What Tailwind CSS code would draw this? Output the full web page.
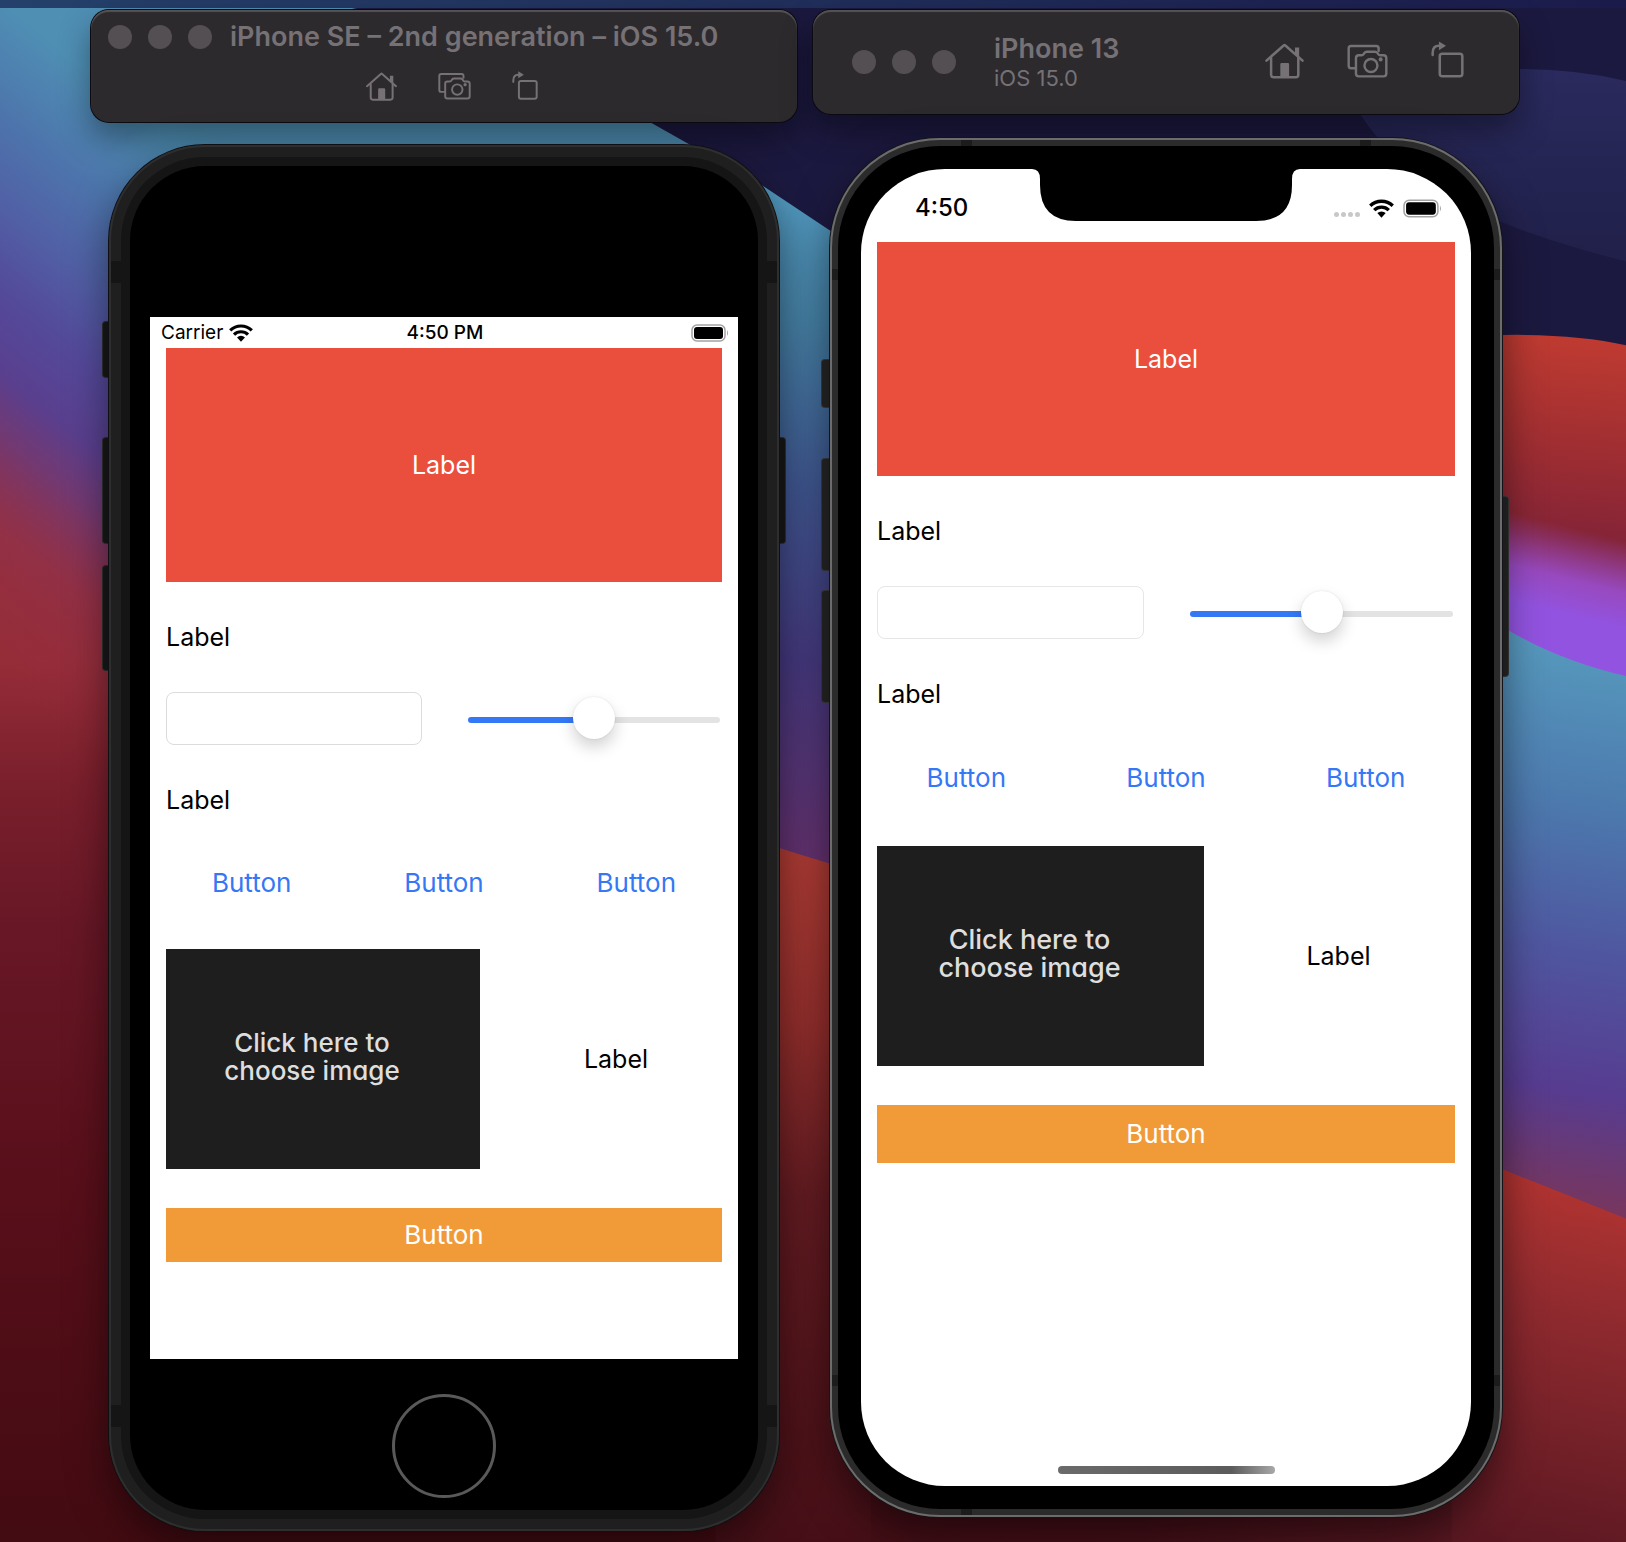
<!DOCTYPE html>
<html lang="en">
<head>
<meta charset="utf-8">
<meta name="viewport" content="width=device-width, initial-scale=1">
<title>Simulator</title>
<script src="https://cdn.jsdelivr.net/npm/@tailwindcss/browser@4"></script>
</head>
<body class="font-['Inter',sans-serif] text-black">
<svg class="hidden" aria-hidden="true">
  <symbol id="home" viewBox="50 36 92 86">
    <g fill="none" stroke="currentColor" stroke-width="6" stroke-linecap="round" stroke-linejoin="round">
      <path d="M53 78 L94 42 Q96 40 98 42 L139 78"/>
      <path d="M64 72 V112 Q64 118 70 118 H123 Q129 118 129 112 V72"/>
    </g>
    <path d="M121 47 h10 v24 l-10 -9 z M86 118 V87 Q86 84 89 84 H104 Q107 84 107 87 V118 Z" fill="currentColor"/>
  </symbol>
  <symbol id="camera" viewBox="266 38 101 84">
    <g fill="none" stroke="currentColor" stroke-width="6" stroke-linecap="round" stroke-linejoin="round">
      <path d="M286 98 H276 Q270 98 270 92 V49 Q270 43 276 43 H338 Q344 43 344 49 V55"/>
      <path d="M295 66 H302 Q305 66 307 63 L309 60 Q311 57 315 57 H335 Q339 57 341 60 L343 63 Q345 66 348 66 H356 Q363 66 363 73 V111 Q363 118 356 118 H295 Q288 118 288 111 V73 Q288 66 295 66 Z"/>
      <circle cx="325" cy="91" r="16"/>
    </g>
    <circle cx="349" cy="76" r="5" fill="currentColor"/>
  </symbol>
  <symbol id="rotate" viewBox="485 32 79 88">
    <g fill="none" stroke="currentColor" stroke-width="6" stroke-linecap="round">
      <rect x="506" y="62" width="54" height="54" rx="6"/>
      <path d="M489 65 V60 Q489 43 504 43"/>
    </g>
    <path d="M504 33 L521 43 L504 54 Z" fill="currentColor"/>
  </symbol>
  <symbol id="wifi" viewBox="0 0 24 18">
    <g fill="none" stroke="currentColor" stroke-width="3.2">
      <path d="M1.2 6.4 A15.5 15.5 0 0 1 22.8 6.4"/>
      <path d="M5 10.6 A10 10 0 0 1 19 10.6"/>
    </g>
    <path d="M12 17.8 L8 13.4 A6 6 0 0 1 16 13.4 Z" fill="currentColor"/>
  </symbol>
  <symbol id="battery" viewBox="0 0 38 18">
    <rect x="1" y="1" width="33" height="16" rx="5" fill="none" stroke="#a3a3a3" stroke-width="1.5"/>
    <rect x="3" y="3" width="29" height="12" rx="3" fill="currentColor"/>
    <path d="M36 6 Q38 9 36 12 Z" fill="#a3a3a3"/>
  </symbol>
</svg>

<div class="relative isolate min-h-screen overflow-hidden bg-[#4a101b]">
  <!-- desktop wallpaper -->
  <svg class="absolute inset-0 -z-10 h-full w-full" viewBox="0 0 1568 1487" preserveAspectRatio="none" aria-hidden="true">
    <defs>
      <linearGradient id="g-left" gradientUnits="userSpaceOnUse" x1="0" y1="0" x2="0" y2="1487">
        <stop offset=".34" stop-color="#97303c"/><stop offset=".43" stop-color="#952c38"/><stop offset=".51" stop-color="#7a1f2c"/>
        <stop offset=".6" stop-color="#681726"/><stop offset=".77" stop-color="#580f1a"/><stop offset="1" stop-color="#430b12"/>
      </linearGradient>
      <linearGradient id="g-sky" gradientUnits="userSpaceOnUse" x1="0" y1="0" x2="-320" y2="400">
        <stop offset="0" stop-color="#4f8fb4"/><stop offset=".17" stop-color="#4d74ac"/><stop offset=".3" stop-color="#5160a5"/>
        <stop offset=".43" stop-color="#54499a"/><stop offset=".55" stop-color="#5a3f8e"/><stop offset=".64" stop-color="#6e3a78" stop-opacity=".9"/>
        <stop offset=".78" stop-color="#8e3150" stop-opacity=".5"/><stop offset="1" stop-color="#952c38" stop-opacity="0"/>
      </linearGradient>
      <linearGradient id="g-mid" gradientUnits="userSpaceOnUse" x1="0" y1="180" x2="0" y2="830">
        <stop offset="0" stop-color="#529ac0"/><stop offset=".2" stop-color="#4681a6"/><stop offset=".45" stop-color="#3f558f"/>
        <stop offset=".7" stop-color="#45397f"/><stop offset="1" stop-color="#653270"/>
      </linearGradient>
      <linearGradient id="g-midred" gradientUnits="userSpaceOnUse" x1="0" y1="820" x2="0" y2="1487">
        <stop offset="0" stop-color="#b03c35"/><stop offset=".25" stop-color="#942f2d"/><stop offset=".5" stop-color="#641c22"/><stop offset="1" stop-color="#460f17"/>
      </linearGradient>
      <linearGradient id="g-navy" gradientUnits="userSpaceOnUse" x1="0" y1="66" x2="0" y2="250">
        <stop offset="0" stop-color="#2a2a5e"/><stop offset="1" stop-color="#20204a"/>
      </linearGradient>
      <linearGradient id="g-red" gradientUnits="userSpaceOnUse" x1="1490" y1="320" x2="1470" y2="550">
        <stop offset="0" stop-color="#c03b31"/><stop offset=".5" stop-color="#9d2d32"/><stop offset=".85" stop-color="#842437"/><stop offset="1" stop-color="#842848"/>
      </linearGradient>
      <linearGradient id="g-violet" gradientUnits="userSpaceOnUse" x1="1450" y1="492" x2="1430" y2="572">
        <stop offset="0" stop-color="#9a4bc4" stop-opacity="0"/><stop offset=".6" stop-color="#9a4dcc" stop-opacity=".9"/><stop offset="1" stop-color="#9253e0"/>
      </linearGradient>
      <linearGradient id="g-right" gradientUnits="userSpaceOnUse" x1="1530" y1="620" x2="1450" y2="1150">
        <stop offset="0" stop-color="#5699bd"/><stop offset=".3" stop-color="#4c78ad"/><stop offset=".55" stop-color="#4f569f"/>
        <stop offset=".8" stop-color="#573c90"/><stop offset="1" stop-color="#763660"/>
      </linearGradient>
      <linearGradient id="g-low" gradientUnits="userSpaceOnUse" x1="1530" y1="1140" x2="1450" y2="1487">
        <stop offset="0" stop-color="#b23431"/><stop offset=".35" stop-color="#8f2a2f"/><stop offset="1" stop-color="#5c1822"/>
      </linearGradient>
      <linearGradient id="g-floor" x1="0" x2="1" y1="0" y2="0">
        <stop offset="0" stop-color="#430b12"/><stop offset=".7" stop-color="#430f17"/><stop offset="1" stop-color="#5f1a25"/>
      </linearGradient>
    </defs>
    <rect width="1568" height="1487" fill="url(#g-floor)"/>
    <rect width="760" height="1487" fill="url(#g-left)"/>
    <rect width="760" height="1487" fill="url(#g-sky)"/>
    <path d="M690 80 H840 V850 L752 818 L690 800 Z" fill="url(#g-mid)"/>
    <path d="M690 790 L752 818 L840 845 V1487 H690 Z" fill="url(#g-midred)"/>
    <path d="M340 0 H1568 V340 H1000 L800 222 L737 180 L627 118 Q480 30 340 8 Z" fill="#1c1940"/>
    <path d="M1300 90 Q1450 50 1568 78 V252 Q1500 235 1450 215 Q1340 170 1300 90 Z" fill="url(#g-navy)"/>
    <path d="M1400 323 H1450 Q1520 322 1568 333 V660 H1400 Z" fill="url(#g-red)"/>
    <path d="M1400 440 H1568 V670 H1400 Z" fill="url(#g-violet)"/>
    <path d="M1400 580 L1450 605 Q1500 636 1568 652 V1190 H1400 Z" fill="url(#g-right)"/>
    <path d="M1400 1105 L1450 1128 L1568 1175 V1487 H1400 Z" fill="url(#g-low)"/>
  </svg>

  <div class="h-2 bg-linear-to-r from-[#24416b] to-[#1b1b4b]"></div>

  <main class="pt-[2px] pr-4 pb-[10px]">
    <div class="mx-auto grid max-w-[1428px] grid-cols-2 items-start gap-4">

      <!-- iPhone SE -->
      <section aria-label="iPhone SE simulator">
        <header class="h-28 rounded-[18px] bg-[#2d2a2d] text-[#757175] shadow-[inset_0_2px_1px_#565356,0_0_0_1px_#0b0a10,0_16px_32px_rgba(0,0,0,0.4)]">
          <div class="flex h-[54px] items-center pl-[17px]">
            <div class="flex gap-4">
              <button class="size-6 rounded-full bg-[#534f53]" aria-label="Close"></button>
              <button class="size-6 rounded-full bg-[#534f53]" aria-label="Minimize"></button>
              <button class="size-6 rounded-full bg-[#534f53]" aria-label="Zoom"></button>
            </div>
            <h1 class="ml-[18px] text-[27px] leading-8 font-semibold whitespace-nowrap">iPhone SE – 2nd generation – iOS 15.0</h1>
          </div>
          <div class="flex h-11 items-center justify-center gap-[41px] pl-4">
            <button aria-label="Home"><svg class="block h-[29px] w-[31px]"><use href="#home"/></svg></button>
            <button aria-label="Screenshot"><svg class="block h-7 w-[33px]"><use href="#camera"/></svg></button>
            <button aria-label="Rotate"><svg class="mb-[2px] block h-[29px] w-[26px]"><use href="#rotate"/></svg></button>
          </div>
        </header>

        <div class="relative mx-auto mt-[23px] max-w-[670px]">
          <div class="absolute top-[177px] -left-[6px] h-[55px] w-3 rounded-[3px] bg-[#191919] ring-1 ring-[#303030]"></div>
          <div class="absolute top-[293px] -left-[6px] h-[105px] w-3 rounded-[3px] bg-[#191919] ring-1 ring-[#303030]"></div>
          <div class="absolute top-[421px] -left-[6px] h-[104px] w-3 rounded-[3px] bg-[#191919] ring-1 ring-[#303030]"></div>
          <div class="absolute top-[293px] -right-[6px] h-[105px] w-3 rounded-[3px] bg-[#191919] ring-1 ring-[#303030]"></div>

          <div class="relative rounded-[96px] bg-[#1f1f1f] p-3 shadow-[inset_0_0_0_2px_#2e2e2e,0_0_0_1px_#101014,0_16px_40px_rgba(0,0,0,0.5)]">
            <div class="absolute inset-x-[2px] top-[116px] h-[22px] bg-[#151515]"></div>
            <div class="absolute inset-x-[2px] bottom-[104px] h-[22px] bg-[#151515]"></div>
            <div class="relative rounded-[84px] bg-[#151515] p-[9px]">
              <div class="rounded-[75px] bg-black px-5 pt-[151px] pb-3">
                <div class="bg-white">
                  <div class="grid h-[31px] grid-cols-3 items-center pr-[9px] pl-[11px] text-[19px] leading-6">
                    <div class="flex items-center gap-[6px]"><span>Carrier</span><svg class="h-[18px] w-6"><use href="#wifi"/></svg></div>
                    <div class="text-center font-medium">4:50 PM</div>
                    <svg class="h-[18px] w-[38px] justify-self-end"><use href="#battery"/></svg>
                  </div>
                  <div class="flex flex-col gap-[39px] px-4 pb-[97px] text-[25px] leading-8">
                    <div class="flex h-[234px] items-center justify-center bg-[#ea4e3d] text-white">Label</div>
                    <label for="se-field" class="block">Label</label>
                    <div class="grid grid-cols-2 items-center gap-11">
                      <input id="se-field" type="text" class="h-[53px] w-full rounded-lg border border-[#dcdcdc] bg-white px-3">
                      <div class="px-[2px] pt-[2px]">
                        <input type="range" aria-labelledby="se-slider-label" class="block h-[42px] w-full appearance-none bg-transparent [&::-webkit-slider-runnable-track]:h-[6px] [&::-webkit-slider-runnable-track]:rounded-full [&::-webkit-slider-runnable-track]:bg-linear-to-r [&::-webkit-slider-runnable-track]:from-[#3478f6] [&::-webkit-slider-runnable-track]:from-50% [&::-webkit-slider-runnable-track]:to-[#e3e3e4] [&::-webkit-slider-runnable-track]:to-50% [&::-webkit-slider-thumb]:-mt-5 [&::-webkit-slider-thumb]:size-[42px] [&::-webkit-slider-thumb]:appearance-none [&::-webkit-slider-thumb]:rounded-full [&::-webkit-slider-thumb]:bg-white [&::-webkit-slider-thumb]:shadow-[0_0_2px_rgba(0,0,0,0.12),0_8px_16px_rgba(0,0,0,0.18)]">
                      </div>
                    </div>
                    <div id="se-slider-label">Label</div>
                    <div class="grid h-[55px] grid-cols-3 gap-[21px] text-[26px] text-[#3478f6]">
                      <button>Button</button><button>Button</button><button>Button</button>
                    </div>
                    <div class="flex h-[220px] gap-[30px]">
                      <button class="w-[314px] bg-[#1e1e1e] pr-[22px] pb-1 text-center text-[26px] leading-7 font-medium text-[#dedede] [font-feature-settings:'cv11']">Click here to<br>choose image</button>
                      <div class="flex flex-1 items-center justify-center">Label</div>
                    </div>
                    <button class="h-[54px] bg-[#f19b38] text-[26px] text-white">Button</button>
                  </div>
                </div>
                <button class="mx-auto mt-[35px] block size-[104px] rounded-full border-3 border-[#595959]" aria-label="Home button"></button>
              </div>
            </div>
          </div>
        </div>
      </section>

      <!-- iPhone 13 -->
      <section aria-label="iPhone 13 simulator">
        <header class="flex h-[104px] items-center rounded-[18px] bg-[#2d2a2d] pr-[55px] pl-[39px] text-[#757175] shadow-[inset_0_2px_1px_#565356,0_0_0_1px_#0b0a10,0_16px_32px_rgba(0,0,0,0.4)]">
          <div class="flex gap-4">
            <button class="size-6 rounded-full bg-[#534f53]" aria-label="Close"></button>
            <button class="size-6 rounded-full bg-[#534f53]" aria-label="Minimize"></button>
            <button class="size-6 rounded-full bg-[#534f53]" aria-label="Zoom"></button>
          </div>
          <div class="ml-[38px]">
            <h1 class="text-[27px] leading-8 font-semibold">iPhone 13</h1>
            <p class="text-[22px] leading-[26px]">iOS 15.0</p>
          </div>
          <div class="ml-auto flex items-center gap-[43px] pb-[2px]">
            <button aria-label="Home"><svg class="block h-9 w-[39px]"><use href="#home"/></svg></button>
            <button aria-label="Screenshot"><svg class="block h-[34px] w-[41px]"><use href="#camera"/></svg></button>
            <button aria-label="Rotate"><svg class="mb-1 block h-[37px] w-[33px]"><use href="#rotate"/></svg></button>
          </div>
        </header>

        <div class="relative mx-auto mt-6 max-w-[672px]">
          <div class="absolute top-[222px] -left-2 h-[47px] w-3 rounded-[3px] bg-[#262626] ring-1 ring-[#3c3c3c]"></div>
          <div class="absolute top-[321px] -left-2 h-[111px] w-3 rounded-[3px] bg-[#262626] ring-1 ring-[#3c3c3c]"></div>
          <div class="absolute top-[453px] -left-2 h-[111px] w-3 rounded-[3px] bg-[#262626] ring-1 ring-[#3c3c3c]"></div>
          <div class="absolute top-[359px] -right-[6px] h-[179px] w-3 rounded-[3px] bg-[#262626] ring-1 ring-[#3c3c3c]"></div>

          <div class="relative rounded-[110px] bg-[#2b2b2b] p-2 shadow-[inset_0_0_0_2px_#6c6c6c,0_0_0_1px_#141418,0_16px_40px_rgba(0,0,0,0.5)]">
            <div class="absolute inset-y-[2px] left-[131px] w-[11px] bg-[#1c1c1c]"></div>
            <div class="absolute top-[2px] right-[131px] h-2 w-[11px] bg-[#1c1c1c]"></div>
            <div class="absolute inset-x-[2px] top-[131px] h-[11px] bg-[#1c1c1c]"></div>
            <div class="absolute inset-x-[2px] bottom-[131px] h-[11px] bg-[#1c1c1c]"></div>
            <div class="relative rounded-[102px] bg-black p-[23px]">
              <div class="relative rounded-[84px] bg-white">
                <svg class="absolute -top-px left-1/2 h-[53px] w-[268px] -translate-x-1/2" viewBox="0 0 268 53" aria-hidden="true">
                  <path d="M0 0 V1 Q8 1 8 11 V17 Q8 53 44 53 H224 Q260 53 260 17 V11 Q260 1 268 1 V0 Z"/>
                </svg>
                <div class="flex h-[73px] items-center justify-between pt-[5px] pr-[29px] pl-[54px]">
                  <span class="text-[24px] leading-8 font-medium">4:50</span>
                  <div class="flex items-center gap-[9px]">
                    <div class="mt-3 flex gap-[2px]">
                      <i class="size-[5px] rounded-full bg-[#c8c8c8]"></i><i class="size-[5px] rounded-full bg-[#c8c8c8]"></i><i class="size-[5px] rounded-full bg-[#c8c8c8]"></i><i class="size-[5px] rounded-full bg-[#c8c8c8]"></i>
                    </div>
                    <svg class="h-[19px] w-[25px]"><use href="#wifi"/></svg>
                    <svg class="h-[19px] w-[39px]"><use href="#battery"/></svg>
                  </div>
                </div>
                <div class="flex flex-col gap-[39px] px-4 text-[25px] leading-8">
                  <div class="flex h-[234px] items-center justify-center bg-[#ea4e3d] text-white">Label</div>
                  <label for="i13-field" class="block">Label</label>
                  <div class="grid grid-cols-2 items-center gap-11">
                    <input id="i13-field" type="text" class="h-[53px] w-full rounded-lg border border-[#e6e6e6] bg-white px-3">
                    <div class="px-[2px] pt-[2px]">
                      <input type="range" aria-labelledby="i13-slider-label" class="block h-[42px] w-full appearance-none bg-transparent [&::-webkit-slider-runnable-track]:h-[6px] [&::-webkit-slider-runnable-track]:rounded-full [&::-webkit-slider-runnable-track]:bg-linear-to-r [&::-webkit-slider-runnable-track]:from-[#3478f6] [&::-webkit-slider-runnable-track]:from-50% [&::-webkit-slider-runnable-track]:to-[#e3e3e4] [&::-webkit-slider-runnable-track]:to-50% [&::-webkit-slider-thumb]:-mt-5 [&::-webkit-slider-thumb]:size-[42px] [&::-webkit-slider-thumb]:appearance-none [&::-webkit-slider-thumb]:rounded-full [&::-webkit-slider-thumb]:bg-white [&::-webkit-slider-thumb]:shadow-[0_0_2px_rgba(0,0,0,0.12),0_8px_16px_rgba(0,0,0,0.18)]">
                    </div>
                  </div>
                  <div id="i13-slider-label">Label</div>
                  <div class="grid h-[58px] grid-cols-3 gap-[21px] text-[26px] text-[#3478f6]">
                    <button>Button</button><button>Button</button><button>Button</button>
                  </div>
                  <div class="flex h-[220px] gap-[18px]">
                    <button class="w-[327px] bg-[#1e1e1e] pr-[22px] pb-1 text-center text-[27px] leading-7 font-medium text-[#dedede] [font-feature-settings:'cv11']">Click here to<br>choose image</button>
                    <div class="flex flex-1 items-center justify-center">Label</div>
                  </div>
                  <button class="h-[58px] bg-[#f19b38] text-[26px] text-white">Button</button>
                </div>
                <div class="flex justify-center pt-[303px] pb-3">
                  <div class="h-2 w-[217px] rounded-full bg-linear-to-r from-[#6a6a6a] via-[#5c5c5c] via-80% to-[#a8a8a8]"></div>
                </div>
              </div>
            </div>
          </div>
        </div>
      </section>
    </div>
  </main>
</div>
</body>
</html>
